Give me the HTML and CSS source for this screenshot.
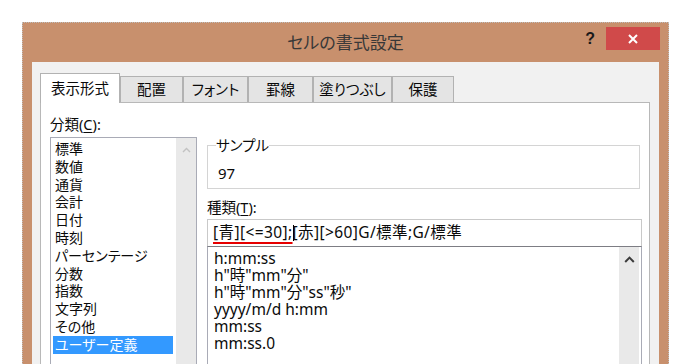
FILE: index.html
```html
<!DOCTYPE html>
<html lang="ja">
<head>
<meta charset="utf-8">
<title>セルの書式設定</title>
<link rel="stylesheet" href="styles.css">
</head>
<body>
<div class="dialog">
  <div class="titlebar">
    <div class="tb-spacer"></div>
    <div class="title">セルの書式設定</div>
    <div class="tb-buttons">
      <span class="help">?</span>
      <span class="close">
        <svg width="10" height="10" viewBox="0 0 10 10"><path d="M1 1L9 9M9 1L1 9" stroke="#fff" stroke-width="2" fill="none"/></svg>
      </span>
    </div>
  </div>
  <div class="body">
    <div class="tabs">
      <div class="tab active tab-format">表示形式</div>
      <div class="tab tab-align">配置</div>
      <div class="tab tab-font">フォント</div>
      <div class="tab tab-border">罫線</div>
      <div class="tab tab-fill">塗りつぶし</div>
      <div class="tab tab-protect">保護</div>
    </div>
    <div class="panel">
      <div class="col-left">
        <div class="label">分類(<u>C</u>):</div>
        <div class="listbox cat-list">
          <ul class="items">
            <li>標準</li>
            <li>数値</li>
            <li>通貨</li>
            <li>会計</li>
            <li>日付</li>
            <li>時刻</li>
            <li>パーセンテージ</li>
            <li>分数</li>
            <li>指数</li>
            <li>文字列</li>
            <li>その他</li>
            <li class="selected">ユーザー定義</li>
          </ul>
          <div class="scrollbar">
            <svg width="9" height="6" viewBox="0 0 9 6"><polyline points="1,5 4.5,1.5 8,5" stroke="#c2c2c2" stroke-width="1.4" fill="none"/></svg>
          </div>
        </div>
      </div>
      <div class="col-right">
        <fieldset class="sample">
          <legend>サンプル</legend>
          <div class="sample-value">97</div>
        </fieldset>
        <div class="label type-label">種類(<u>T</u>):</div>
        <div class="format-input"><span class="marked">[青][&lt;=30];</span><span class="caret"></span>[赤][&gt;60]G/標準;G/標準</div>
        <div class="listbox fmt-list">
          <ul class="items">
            <li>h:mm:ss</li>
            <li>h"時"mm"分"</li>
            <li>h"時"mm"分"ss"秒"</li>
            <li>yyyy/m/d h:mm</li>
            <li>mm:ss</li>
            <li>mm:ss.0</li>
          </ul>
          <div class="scrollbar">
            <svg width="11" height="7" viewBox="0 0 11 7"><polyline points="1.2,6 5.5,1.6 9.8,6" stroke="#3c3c3c" stroke-width="2" fill="none"/></svg>
          </div>
        </div>
      </div>
    </div>
  </div>
</div>
</body>
</html>
```

FILE: styles.css
```css
* {
  box-sizing: border-box;
}

html,
body {
  margin: 0;
  height: 364px;
  overflow: hidden;
  background: #ffffff;
}

body {
  padding: 22px 0 0 22px;
  font-family: "Noto Sans", "Noto Sans CJK JP", sans-serif;
  font-size: 14.5px;
  color: #0a0a0a;
  font-feature-settings: "palt";
}

.dialog {
  width: 647px;
  border: 1px dotted #bdbdbd;
  border-bottom: 0;
  background: #c8906d;
}

/* title bar */
.titlebar {
  display: flex;
  height: 39px;
}

.tb-spacer {
  width: 89px;
}

.title {
  flex: 1;
  text-align: center;
  line-height: 39px;
  font-size: 17px;
  color: #383838;
}

.tb-buttons {
  width: 89px;
  display: flex;
  align-items: flex-start;
  justify-content: flex-end;
  padding: 4px 8px 0 0;
}

.help {
  font-family: "Liberation Sans", sans-serif;
  font-weight: bold;
  font-size: 16px;
  line-height: 23px;
  margin-right: 11px;
  color: #1a1a1a;
}

.close {
  width: 54px;
  height: 23px;
  background: #d04a4a;
  display: flex;
  align-items: center;
  justify-content: center;
}

.close svg {
  display: block;
}

/* body */
.body {
  margin: 0 9px;
  height: 330px;
  padding: 11px 9px 0 8px;
  background: #f1f1f1;
}

.tabs {
  display: flex;
  align-items: flex-end;
  height: 29px;
}

.tab {
  height: 26px;
  border: 1px solid #b2b2b2;
  border-bottom: 0;
  background: #e4e4e4;
  display: flex;
  align-items: center;
  justify-content: center;
  line-height: 1;
  white-space: nowrap;
}

.tab.active {
  height: 30px;
  margin-bottom: -1px;
  background: #ffffff;
  position: relative;
  z-index: 1;
}

.tab-format { width: 80px; }
.tab-align { width: 63px; }
.tab-font { width: 65px; }
.tab-border { width: 65px; }
.tab-fill { width: 79px; }
.tab-protect { width: 62px; }

.panel {
  display: flex;
  gap: 10px;
  height: 300px;
  padding: 12px 7px 0 9px;
  background: #ffffff;
  border: 1px solid #b8b8b8;
  border-bottom: 0;
}

.label {
  line-height: 18px;
  height: 18px;
}

.label u {
  text-underline-offset: 2px;
}

/* list boxes */
.listbox {
  display: flex;
  background: #ffffff;
  border: 1px solid #a9abb6;
  border-bottom: 0;
}

.items {
  list-style: none;
  margin: 0;
  flex: 1;
}

.items li {
  padding-left: 2px;
  white-space: nowrap;
}

.scrollbar {
  width: 20px;
  background: #e9e9e9;
  display: flex;
  flex-direction: column;
  align-items: center;
  padding-top: 9px;
}

.scrollbar svg {
  display: block;
}

.col-left {
  width: 147px;
}

.cat-list {
  margin-top: 4px;
  height: 240px;
}

.cat-list .items {
  padding: 2px 3px 0 2px;
  font-size: 14px;
}

.cat-list .items li {
  line-height: 17.8px;
  height: 17.8px;
}

.cat-list .items li.selected {
  background: #3399ff;
  color: #ffffff;
}

/* right column */
.col-right {
  width: 435px;
}

.sample {
  margin: 21px 2px 0 0;
  padding: 0 0 6px 8px;
  border: 1px solid #d4d4d4;
}

.sample legend {
  padding: 0;
  line-height: 18px;
  font-size: 14.5px;
}

.sample-value {
  margin-top: 10px;
  padding-left: 2px;
  line-height: 18px;
  font-size: 15px;
}

.type-label {
  margin-top: 9px;
}

.format-input {
  margin-top: 3px;
  height: 27px;
  padding: 3px 0 0 5px;
  line-height: 18px;
  font-size: 15.5px;
  letter-spacing: 0.4px;
  white-space: nowrap;
  border: 1px solid #c9c9c9;
  border-bottom: 0;
}

.marked {
  text-decoration: underline 2px #e60000;
  text-underline-offset: 4px;
  text-decoration-skip-ink: none;
}

.caret {
  display: inline-block;
  width: 1px;
  height: 16px;
  margin-right: -1px;
  background: #000000;
  vertical-align: -3px;
}

.fmt-list {
  height: 130px;
  border-top-color: #7d7d84;
}

.fmt-list .items {
  padding: 3px 0 0 4px;
  font-size: 15.5px;
}

.fmt-list .items li {
  line-height: 17px;
  height: 17px;
}

.fmt-list .scrollbar {
  margin-right: 2px;
}
```
